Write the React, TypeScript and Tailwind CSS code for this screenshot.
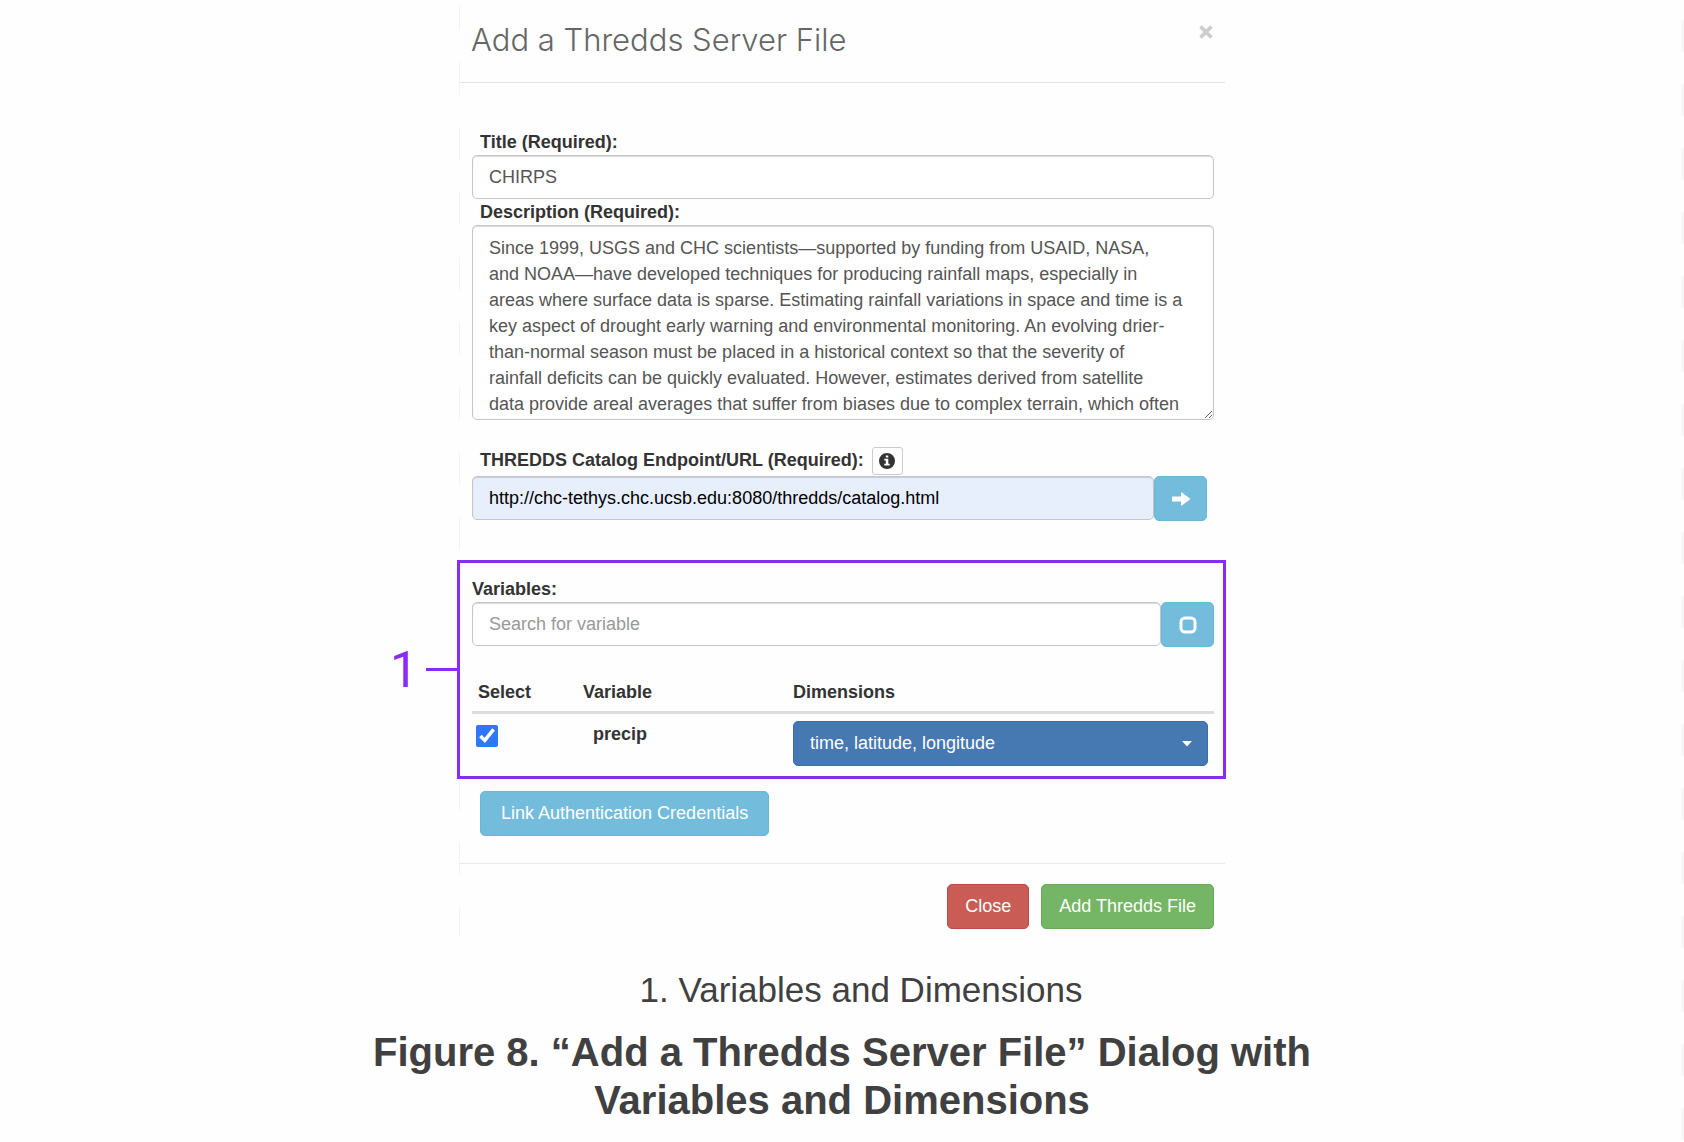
import { useState } from 'react';
import type { ReactNode } from 'react';

const DESCRIPTION = [
  'Since 1999, USGS and CHC scientists—supported by funding from USAID, NASA,',
  'and NOAA—have developed techniques for producing rainfall maps, especially in',
  'areas where surface data is sparse. Estimating rainfall variations in space and time is a',
  'key aspect of drought early warning and environmental monitoring. An evolving drier-',
  'than-normal season must be placed in a historical context so that the severity of',
  'rainfall deficits can be quickly evaluated. However, estimates derived from satellite',
  'data provide areal averages that suffer from biases due to complex terrain, which often',
].join('\n');

const FIELD =
  'block w-full rounded-[5px] border border-[#c6c6c6] bg-white px-4 text-[18px] text-[#555] shadow-[inset_0_1px_1px_rgba(0,0,0,0.15)] outline-none';

function InfoIcon() {
  return (
    <svg viewBox="0 0 16 16" className="size-4" fill="#333" aria-hidden="true">
      <path
        fillRule="evenodd"
        d="M8 0a8 8 0 1 0 0 16A8 8 0 0 0 8 0ZM6.8 2.6h2.5v2H6.8Zm-1.5 3.2h4v5h1.4v1.8H5.3v-1.8h1.5V7.6H5.3Z"
      />
    </svg>
  );
}

function ArrowIcon() {
  return (
    <svg viewBox="0 0 18 14" className="h-3.5 w-[18px]" fill="#fff" aria-hidden="true">
      <path d="M0 5a.6.6 0 0 1 .6-.6H9V.8c0-.6.5-.8.9-.4l8 6a.7.7 0 0 1 0 1.1l-8 6.1c-.4.4-.9.2-.9-.4V9.600H.6A.6.6 0 0 1 0 9Z" />
    </svg>
  );
}

function SquareIcon() {
  return (
    <svg viewBox="0 0 18 18" className="size-[18px]" fill="none" stroke="#fff" strokeWidth="3" aria-hidden="true">
      <rect x="2" y="2" width="14" height="14" rx="4" />
    </svg>
  );
}

function IconButton({ label, children }: { label: string; children: ReactNode }) {
  return (
    <button
      type="button"
      aria-label={label}
      className="flex h-[45px] w-[53px] shrink-0 items-center justify-center rounded-[5px] border border-[#68b8d8] bg-[#73bcdb]"
    >
      {children}
    </button>
  );
}

function VariablesTable() {
  const [checked, setChecked] = useState(true);
  return (
    <table className="w-full table-fixed border-collapse text-left">
      <thead>
        <tr className="border-b-3 border-[#ddd]">
          <th className="w-[105px] px-1.5 pt-8 pb-1.5 leading-[26px]">Select</th>
          <th className="w-[210px] px-1.5 pt-8 pb-1.5 leading-[26px]">Variable</th>
          <th className="px-1.5 pt-8 pb-1.5 leading-[26px]">Dimensions</th>
        </tr>
      </thead>
      <tbody>
        <tr className="align-top">
          <td className="px-1 pt-[11px]">
            <input
              type="checkbox"
              aria-label="Select precip"
              checked={checked}
              onChange={(e) => setChecked(e.target.checked)}
              className="block size-[22px] accent-[#2f77f6]"
            />
          </td>
          <td className="px-4 pt-[7px] leading-[26px] font-bold">precip</td>
          <td className="px-1.5 pt-[7px]">
            <div className="relative">
              <select
                aria-label="Dimensions for precip"
                className="block h-[45px] w-full appearance-none rounded-[5px] border border-[#3b6ea5] bg-[#4678b2] px-4 text-[18px] text-white outline-none"
              >
                <option>time, latitude, longitude</option>
              </select>
              <svg
                viewBox="0 0 10 6"
                className="pointer-events-none absolute top-5 right-4 h-1.5 w-2.5"
                fill="#fff"
                aria-hidden="true"
              >
                <path d="M0 0h10L5 5.500Z" />
              </svg>
            </div>
          </td>
        </tr>
      </tbody>
    </table>
  );
}

export default function App() {
  return (
    <main className="relative min-h-screen bg-[#fefefe] font-['Liberation_Sans',Arial,sans-serif] text-[18px] text-[#333]">
      <div
        aria-hidden="true"
        className="absolute top-5 right-0 bottom-0 w-[3px] bg-[repeating-linear-gradient(to_bottom,#f7f7f7_0_32px,transparent_32px_64px)]"
      />
      <div className="relative mx-auto w-full max-w-[766px]">
        <div
          aria-hidden="true"
          className="absolute top-[5px] bottom-0 left-0 w-px bg-[repeating-linear-gradient(to_bottom,#f3f3f3_0_25px,transparent_25px_57px,#f3f3f3_57px_65px)]"
        />
        <header className="flex h-[83px] items-start justify-between border-b border-[#e3e3e3] px-3">
          <h1 className="pt-5 font-['Inter'] text-[31px] leading-10 font-light text-[#666]">Add a Thredds Server File</h1>
          <button type="button" aria-label="Close dialog" className="mt-[25px] p-0">
            <svg viewBox="0 0 14 14" className="size-3.5" stroke="#ccc" strokeWidth="3.600" aria-hidden="true">
              <path d="M1.500 1.500l11 11M12.500 1.500l-11 11" />
            </svg>
          </button>
        </header>

        <form className="pr-[11px] pl-[13px]" onSubmit={(e) => e.preventDefault()}>
          <label htmlFor="title" className="mt-[46px] block pl-2 leading-[26px] font-bold">
            Title (Required):
          </label>
          <input id="title" type="text" defaultValue="CHIRPS" className={`${FIELD} h-11`} />

          <label htmlFor="description" className="block pl-2 leading-[26px] font-bold">
            Description (Required):
          </label>
          <textarea
            id="description"
            defaultValue={DESCRIPTION}
            className={`${FIELD} h-[195px] resize overflow-hidden pt-[9px] leading-[26px] whitespace-pre`}
          />

          <div className="mt-[27px] flex items-center gap-2 pl-2">
            <label htmlFor="endpoint" className="pb-0.5 leading-[26px] font-bold">
              THREDDS Catalog Endpoint/URL (Required):
            </label>
            <button
              type="button"
              aria-label="Endpoint information"
              className="flex h-7 w-[31px] items-center justify-center rounded-[3px] border border-[#ccc] bg-white"
            >
              <InfoIcon />
            </button>
          </div>
          <div className="mt-px flex pr-[7px]">
            <input
              id="endpoint"
              type="text"
              defaultValue="http://chc-tethys.chc.ucsb.edu:8080/thredds/catalog.html"
              className="block h-11 min-w-0 flex-1 rounded-[5px] border border-[#c6c6c6] bg-[#e8effc] px-4 text-[18px] text-black shadow-[inset_0_1px_1px_rgba(0,0,0,0.15)] outline-none"
            />
            <IconButton label="Load catalog">
              <ArrowIcon />
            </IconButton>
          </div>

          <section className="relative mt-[39px] -mr-3 -ml-[15px] border-3 border-[#8b2cf5] pt-[13px] pr-[9px] pb-[10px] pl-3">
            <div className="absolute top-1/2 right-full flex -translate-y-1/2 items-center gap-2 text-[#8b2cf5]">
              <span className="font-['Roboto'] text-[50px] leading-none">1</span>
              <span className="h-[3px] w-[34px] bg-[#8b2cf5]" />
            </div>
            <label htmlFor="variable-search" className="block leading-[26px] font-bold">
              Variables:
            </label>
            <div className="flex">
              <input
                id="variable-search"
                type="text"
                placeholder="Search for variable"
                className="block h-11 min-w-0 flex-1 rounded-[5px] border border-[#c6c6c6] bg-white px-4 text-[18px] text-[#555] shadow-[inset_0_1px_1px_rgba(0,0,0,0.15)] outline-none placeholder:text-[#999]"
              />
              <IconButton label="Select all variables">
                <SquareIcon />
              </IconButton>
            </div>
            <VariablesTable />
          </section>

          <button
            type="button"
            className="mt-3 ml-2 h-[45px] rounded-[5px] border border-[#68b8d8] bg-[#73bcdb] px-5 text-white"
          >
            Link Authentication Credentials
          </button>
        </form>

        <footer className="mt-[27px] flex justify-end gap-3 border-t border-[#e8e8e8] pt-5 pr-[11px] pb-2">
          <button type="button" className="h-[45px] rounded-[5px] border border-[#bd4c47] bg-[#c95c55] px-[17px] text-white">
            Close
          </button>
          <button type="button" className="h-[45px] rounded-[5px] border border-[#67a957] bg-[#75b566] px-[17px] text-white">
            Add Thredds File
          </button>
        </footer>
      </div>

      <div className="text-center text-[#404040]">
        <p className="mt-[33px] pl-[38px] text-[35px] leading-10">1. Variables and Dimensions</p>
        <h2 className="mx-auto mt-[18px] max-w-[960px] text-[40px] leading-12 font-bold">
          Figure 8. “Add a Thredds Server File” Dialog with Variables and Dimensions
        </h2>
      </div>
    </main>
  );
}
